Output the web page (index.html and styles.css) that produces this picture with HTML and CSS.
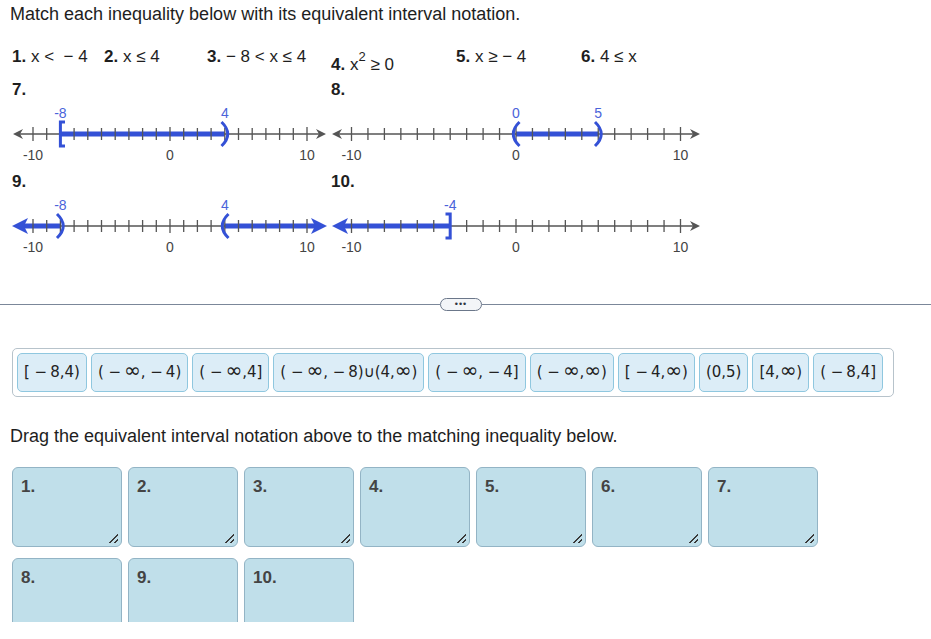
FILE: index.html
```html
<!DOCTYPE html>
<html lang="en">
<head>
    <meta charset="UTF-8">
    <meta name="viewport" content="width=device-width, initial-scale=1.0">
    <title>Interval Notation Match</title>
    <link rel="stylesheet" href="styles.css">
</head>
<body>
    <div class="page">
        <p class="prompt">Match each inequality below with its equivalent interval notation.</p>

        <div class="ineq-row">
            <span class="ineq"><b>1.</b> x &lt;  − 4</span>
            <span class="ineq"><b>2.</b> x ≤ 4</span>
            <span class="ineq"><b>3.</b> − 8 &lt; x ≤ 4</span>
            <span class="ineq ineq-low"><b>4.</b> x<sup>2</sup> ≥ 0</span>
            <span class="ineq"><b>5.</b> x ≥ − 4</span>
            <span class="ineq"><b>6.</b> 4 ≤ x</span>
        </div>

        <div class="graphs">
            <!-- 7: [-8,4) -->
            <div class="graph">
                <div class="graph-label">7.</div>
                <svg class="line-a" width="319" height="72" viewBox="0 0 319 72">
                    <line class="axis" x1="4" y1="34" x2="310" y2="34"/>
                    <path class="head" d="M1 34 L11 29 L8 34 L11 39 Z"/>
                    <path class="head" d="M314 34 L304 29 L307 34 L304 39 Z"/>
                    <path class="blue-bar" d="M48.4 34 H212.8"/>
                    <path class="ticks" d="M34.7 28V40M48.4 28V40M62.1 28V40M75.8 28V40M89.5 28V40M103.2 28V40M116.9 28V40M130.6 28V40M144.3 28V40M171.7 28V40M185.4 28V40M199.1 28V40M212.8 28V40M226.5 28V40M240.2 28V40M253.9 28V40M267.6 28V40M281.3 28V40"/>
                    <path class="ticks" d="M21 27V41M158 27V41M295 27V41"/>
                    <path class="blue-mark" d="M53 22 H48.4 V46 H53"/>
                    <path class="blue-mark" d="M209.5 22 Q222 34 209.5 46"/>
                    <text class="blue-num" x="48.4" y="18">-8</text>
                    <text class="blue-num" x="212.8" y="18">4</text>
                    <text class="num" x="21" y="60">-10</text>
                    <text class="num" x="158" y="60">0</text>
                    <text class="num" x="295" y="60">10</text>
                </svg>
            </div>

            <!-- 8: (0,5) -->
            <div class="graph">
                <div class="graph-label">8.</div>
                <svg class="line-b" width="375" height="72" viewBox="0 0 375 72">
                    <line class="axis" x1="4" y1="34" x2="366" y2="34"/>
                    <path class="head" d="M1 34 L11 29 L8 34 L11 39 Z"/>
                    <path class="head" d="M369 34 L359 29 L362 34 L359 39 Z"/>
                    <path class="blue-bar" d="M185 34 H267.25"/>
                    <path class="ticks" d="M36.95 28V40M53.4 28V40M69.85 28V40M86.3 28V40M102.75 28V40M119.2 28V40M135.65 28V40M152.1 28V40M168.55 28V40M201.45 28V40M217.9 28V40M234.35 28V40M250.8 28V40M267.25 28V40M283.7 28V40M300.15 28V40M316.6 28V40M333.05 28V40"/>
                    <path class="ticks" d="M20.5 27V41M185 27V41M349.5 27V41"/>
                    <path class="blue-mark" d="M188.5 22 Q176 34 188.5 46"/>
                    <path class="blue-mark" d="M264 22 Q276.5 34 264 46"/>
                    <text class="blue-num" x="185" y="18">0</text>
                    <text class="blue-num" x="267.25" y="18">5</text>
                    <text class="num" x="20.5" y="60">-10</text>
                    <text class="num" x="185" y="60">0</text>
                    <text class="num" x="349.5" y="60">10</text>
                </svg>
            </div>

            <!-- 9: (-inf,-8) U (4,inf) -->
            <div class="graph">
                <div class="graph-label">9.</div>
                <svg class="line-a" width="319" height="72" viewBox="0 0 319 72">
                    <line class="axis" x1="4" y1="34" x2="310" y2="34"/>
                    <path class="blue-bar" d="M8 34 H48.4"/>
                    <path class="blue-bar" d="M212.8 34 H306"/>
                    <path class="ticks" d="M34.7 28V40M48.4 28V40M62.1 28V40M75.8 28V40M89.5 28V40M103.2 28V40M116.9 28V40M130.6 28V40M144.3 28V40M171.7 28V40M185.4 28V40M199.1 28V40M212.8 28V40M226.5 28V40M240.2 28V40M253.9 28V40M267.6 28V40M281.3 28V40"/>
                    <path class="ticks" d="M21 27V41M158 27V41M295 27V41"/>
                    <path class="blue-head" d="M0 34 L16 26 L12 34 L16 42 Z"/>
                    <path class="blue-head" d="M315 34 L299 26 L303 34 L299 42 Z"/>
                    <path class="blue-mark" d="M45 22 Q57.5 34 45 46"/>
                    <path class="blue-mark" d="M216.5 22 Q204 34 216.5 46"/>
                    <text class="blue-num" x="48.4" y="18">-8</text>
                    <text class="blue-num" x="212.8" y="18">4</text>
                    <text class="num" x="21" y="60">-10</text>
                    <text class="num" x="158" y="60">0</text>
                    <text class="num" x="295" y="60">10</text>
                </svg>
            </div>

            <!-- 10: (-inf,-4] -->
            <div class="graph">
                <div class="graph-label">10.</div>
                <svg class="line-b" width="375" height="72" viewBox="0 0 375 72">
                    <line class="axis" x1="4" y1="34" x2="366" y2="34"/>
                    <path class="head" d="M369 34 L359 29 L362 34 L359 39 Z"/>
                    <path class="blue-bar" d="M8 34 H119.2"/>
                    <path class="ticks" d="M36.95 28V40M53.4 28V40M69.85 28V40M86.3 28V40M102.75 28V40M119.2 28V40M135.65 28V40M152.1 28V40M168.55 28V40M201.45 28V40M217.9 28V40M234.35 28V40M250.8 28V40M267.25 28V40M283.7 28V40M300.15 28V40M316.6 28V40M333.05 28V40"/>
                    <path class="ticks" d="M20.5 27V41M185 27V41M349.5 27V41"/>
                    <path class="blue-head" d="M1 34 L17 26 L13 34 L17 42 Z"/>
                    <path class="blue-mark" d="M114.5 22 H119.2 V46 H114.5"/>
                    <text class="blue-num" x="119.2" y="18">-4</text>
                    <text class="num" x="20.5" y="60">-10</text>
                    <text class="num" x="185" y="60">0</text>
                    <text class="num" x="349.5" y="60">10</text>
                </svg>
            </div>
        </div>

        <div class="divider">
            <span class="rule rule-left"></span>
            <span class="pill">•••</span>
            <span class="rule"></span>
        </div>

        <div class="tokens">
            <span class="token">[ −&thinsp;8,4)</span>
            <span class="token">( −&thinsp;<span class="inf">∞</span>, −&thinsp;4)</span>
            <span class="token">( −&thinsp;<span class="inf">∞</span>,4]</span>
            <span class="token">( −&thinsp;<span class="inf">∞</span>, −&thinsp;8)∪(4,<span class="inf">∞</span>)</span>
            <span class="token">( −&thinsp;<span class="inf">∞</span>, −&thinsp;4]</span>
            <span class="token">( −&thinsp;<span class="inf">∞</span>,<span class="inf">∞</span>)</span>
            <span class="token">[ −&thinsp;4,<span class="inf">∞</span>)</span>
            <span class="token">(0,5)</span>
            <span class="token">[4,<span class="inf">∞</span>)</span>
            <span class="token">( −&thinsp;8,4]</span>
        </div>

        <p class="prompt drag-prompt">Drag the equivalent interval notation above to the matching inequality below.</p>

        <div class="drops">
            <div class="drop"><b>1.</b></div>
            <div class="drop"><b>2.</b></div>
            <div class="drop"><b>3.</b></div>
            <div class="drop"><b>4.</b></div>
            <div class="drop"><b>5.</b></div>
            <div class="drop"><b>6.</b></div>
            <div class="drop"><b>7.</b></div>
            <div class="drop"><b>8.</b></div>
            <div class="drop"><b>9.</b></div>
            <div class="drop"><b>10.</b></div>
        </div>
    </div>
</body>
</html>
```
FILE: styles.css
```css
body {
    margin: 0;
    font-family: 'Liberation Sans', Arial, sans-serif;
    color: #1e1e1e;
    background-color: #fff;
}

.page {
    height: 622px;
    overflow: hidden;
    padding: 0 12px;
}

.prompt {
    margin: 4px 0 0 -2px;
    font-size: 18px;
    line-height: 20px;
}

.ineq-row {
    display: grid;
    grid-template-columns: 92px 103px 124px 125px 125px auto;
    height: 20px;
    margin-top: 23px;
    align-items: start;
    font-size: 17px;
    line-height: 20px;
    white-space: pre;
}

.ineq b {
    font-weight: bold;
}

.ineq-low {
    padding-top: 8px;
}

.ineq-low sup {
    font-size: 13px;
    line-height: 0;
    vertical-align: 9px;
}

.graphs {
    display: grid;
    grid-template-columns: 319px 1fr;
    margin-top: 13px;
}

.graph-label {
    font-size: 17px;
    font-weight: bold;
    line-height: 20px;
}

.graph svg {
    display: block;
}

.axis {
    stroke: #555;
    stroke-width: 1.5;
}

.head {
    fill: #555;
}

.ticks {
    stroke: #555;
    stroke-width: 1.3;
    fill: none;
}

.blue-bar {
    stroke: #3451d6;
    stroke-width: 5;
    fill: none;
}

.blue-mark {
    stroke: #3451d6;
    stroke-width: 3;
    fill: none;
}

.blue-head {
    fill: #3451d6;
}

.num, .blue-num {
    font-family: 'Liberation Sans', Arial, sans-serif;
    font-size: 14px;
    text-anchor: middle;
}

.num {
    fill: #444;
}

.blue-num {
    fill: #4a63da;
}

.divider {
    display: flex;
    align-items: center;
    margin: 34px -12px 0;
    height: 13px;
}

.rule {
    flex: 1;
    height: 1px;
    background-color: #7b8799;
}

.rule-left {
    flex: 0 0 440px;
}

.pill {
    width: 40px;
    height: 11px;
    border: 1px solid #6b778a;
    border-radius: 7px;
    background-color: #f3f5f8;
    color: #2e3542;
    font-size: 9px;
    line-height: 11px;
    text-align: center;
    letter-spacing: 1px;
}

.tokens {
    display: flex;
    gap: 4px;
    width: 872px;
    margin-top: 37px;
    padding: 4px;
    border: 1px solid #b7c3cb;
    border-radius: 5px;
}

.token {
    height: 37px;
    padding: 0 6px;
    border: 1px solid #8fc7df;
    border-radius: 5px;
    background-color: #dcedf7;
    font-family: 'DejaVu Sans', Verdana, sans-serif;
    font-size: 15px;
    line-height: 37px;
    color: #222;
    white-space: nowrap;
}

.inf {
    font-size: 20px;
    line-height: 0;
}

.drag-prompt {
    margin-top: 29px;
}

.drops {
    display: grid;
    grid-template-columns: repeat(7, 110px);
    grid-auto-rows: 80px;
    gap: 11px 6px;
    margin-top: 21px;
}

.drop {
    position: relative;
    box-sizing: border-box;
    padding: 10px 8px;
    border: 1px solid #93b4c5;
    border-radius: 6px;
    background-color: #c0dfea;
    font-size: 17px;
    line-height: 18px;
    color: #444;
}

.drop::after {
    content: "";
    position: absolute;
    right: 3px;
    bottom: 3px;
    width: 9px;
    height: 9px;
    background-image: linear-gradient(135deg, transparent 0 48%, #3a3a3a 48% 58%, transparent 58% 74%, #3a3a3a 74% 84%, transparent 84%);
}
```
